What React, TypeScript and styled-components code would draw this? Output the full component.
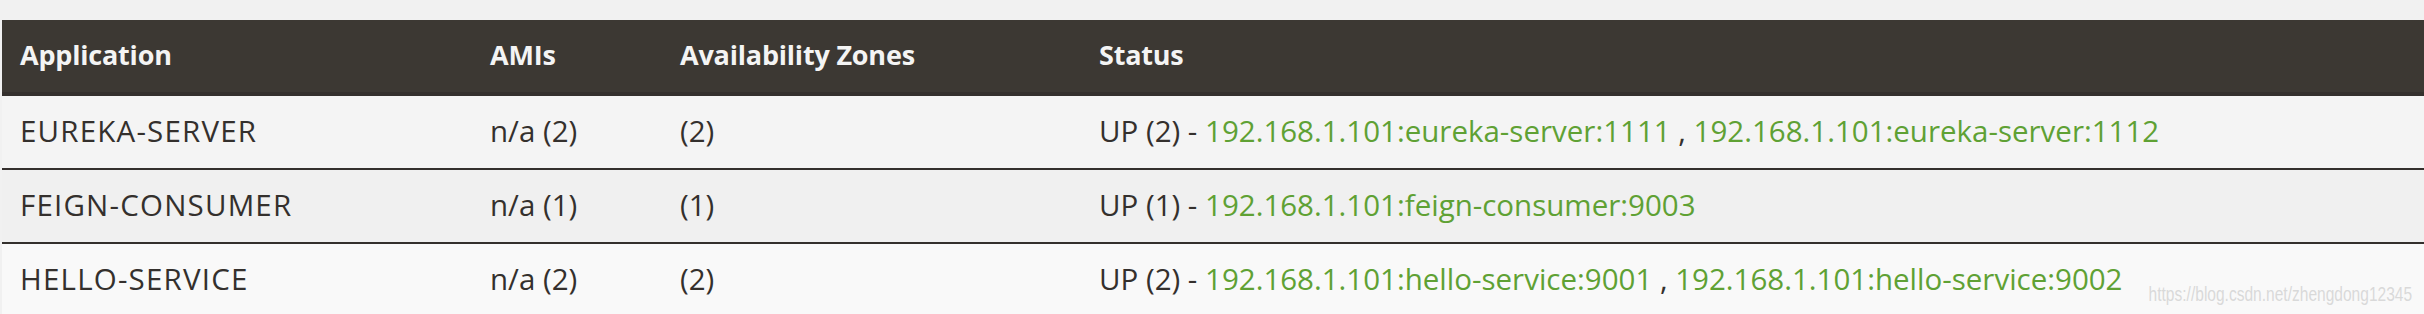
import React from "react";
import styled, { createGlobalStyle } from "styled-components";

const Global = createGlobalStyle`
  html, body { margin: 0; padding: 0; background: #f1f1f1; }
  body { font-family: "Open Sans", "Noto Sans", sans-serif; overflow: hidden; }
`;

const Page = styled.div`
  position: relative;
  padding: 20px 0 0 2px;
  height: 294px;
  overflow: hidden;
`;

const Table = styled.table`
  width: 100%;
  border-collapse: separate;
  border-spacing: 0;
  table-layout: fixed;
`;

const Th = styled.th<{ $w?: number }>`
  ${(p) => (p.$w ? `width: ${p.$w}px;` : "")}
  box-sizing: border-box;
  height: 76px;
  padding: 0 0 4px 18px;
  text-align: left;
  background: #3c3833;
  color: #f4f4f4;
  font-size: 27px;
  font-weight: 700;
  border-bottom: 4px solid #34302d;
  letter-spacing: -0.2px;
`;

const Row = styled.tr<{ $bg: string }>`
  background: ${(p) => p.$bg};
`;

const Td = styled.td<{ $wide?: boolean }>`
  box-sizing: border-box;
  height: 74px;
  padding: 0 0 4px 18px;
  border-bottom: 2px solid #34302d;
  color: #34302d;
  font-size: 29.5px;
  white-space: nowrap;
  vertical-align: middle;
  letter-spacing: ${(p) => (p.$wide ? "1.2px" : "0")};
`;

const Link = styled.a`
  color: #5fa134;
  text-decoration: none;
`;

const Watermark = styled.div`
  position: absolute;
  right: 12px;
  bottom: 8px;
  font-family: "Liberation Sans", Arial, sans-serif;
  font-size: 21px;
  color: #d9d9d9;
  transform: scaleX(0.74);
  transform-origin: right bottom;
  white-space: nowrap;
`;

type App = { name: string; amis: string; zones: string; count: number; inst: string[] };

const apps: App[] = [
  {
    name: "EUREKA-SERVER",
    amis: "n/a (2)",
    zones: "(2)",
    count: 2,
    inst: ["192.168.1.101:eureka-server:1111", "192.168.1.101:eureka-server:1112"],
  },
  {
    name: "FEIGN-CONSUMER",
    amis: "n/a (1)",
    zones: "(1)",
    count: 1,
    inst: ["192.168.1.101:feign-consumer:9003"],
  },
  {
    name: "HELLO-SERVICE",
    amis: "n/a (2)",
    zones: "(2)",
    count: 2,
    inst: ["192.168.1.101:hello-service:9001", "192.168.1.101:hello-service:9002"],
  },
];

const bgs = ["#f4f4f4", "#f0f0f0", "#f9f9f9"];

export default function AppView() {
  return (
    <>
      <Global />
      <Page>
        <Table>
          <thead>
            <tr>
              <Th $w={470}>Application</Th>
              <Th $w={190}>AMIs</Th>
              <Th $w={419}>Availability Zones</Th>
              <Th>Status</Th>
            </tr>
          </thead>
          <tbody>
            {apps.map((a, i) => (
              <Row key={a.name} $bg={bgs[i]}>
                <Td $wide>{a.name}</Td>
                <Td>{a.amis}</Td>
                <Td>{a.zones}</Td>
                <Td>
                  UP ({a.count}) -{" "}
                  {a.inst.map((s, j) => (
                    <React.Fragment key={s}>
                      {j > 0 && " , "}
                      <Link href="#">{s}</Link>
                    </React.Fragment>
                  ))}
                </Td>
              </Row>
            ))}
          </tbody>
        </Table>
        <Watermark>https://blog.csdn.net/zhengdong12345</Watermark>
      </Page>
    </>
  );
}
